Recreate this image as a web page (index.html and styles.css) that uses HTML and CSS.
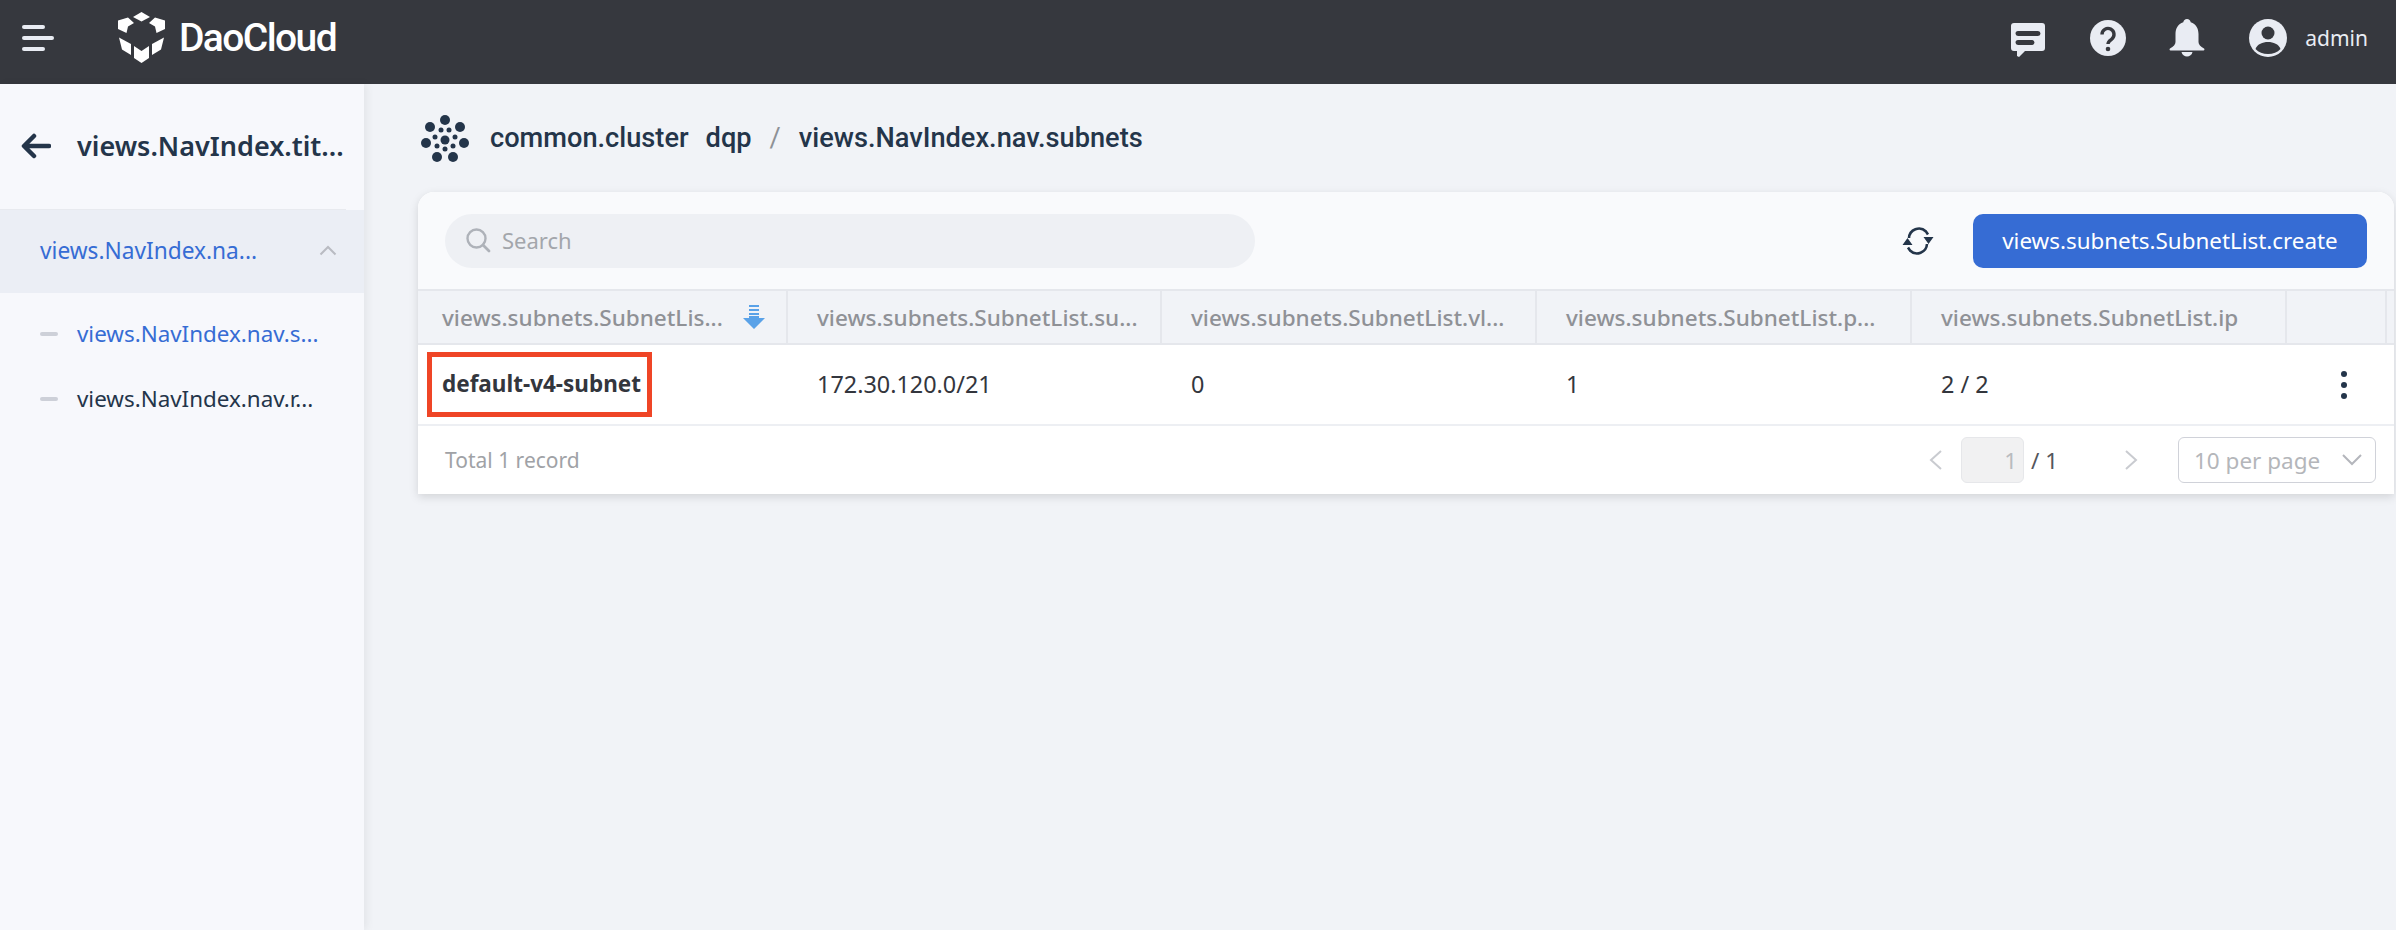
FILE: index.html
```html
<!DOCTYPE html>
<html lang="en">
<head>
<meta charset="utf-8">
<title>DaoCloud</title>
<link rel="stylesheet" href="styles.css">
</head>
<body>
<div class="app">
  <header class="topbar">
    <div class="burger"><span class="b-short"></span><span class="b-long"></span><span class="b-short"></span></div>
    <svg class="logo" viewBox="0 0 64 60" width="64" height="60"><g fill="#fff"><path d="M31.500 4 40 9 31.500 13.500 23 9Z"/><path d="M8 12.500 18 9.500 24 15 18 18.500 16.500 25 8 21Z"/><path d="M55 12.500 45 9.500 39 15 45 18.500 46.500 25 55 21Z"/><path d="M9 29.500 21 36V47L12 41.500Z"/><path d="M54 29.500 42 36V47L51 41.500Z"/><path d="M24 38 31.500 43 39 38V50L31.500 55 24 50Z"/></g></svg>
    <span class="brand">DaoCloud</span>
    <div class="top-right">
      <svg class="i-chat" width="36" height="36" viewBox="0 0 36 36"><path fill="#e9ecf3" fill-rule="evenodd" d="M4 1h28a3 3 0 0 1 3 3v22a3 3 0 0 1-3 3H15l-6 6-2-1v-5H4a3 3 0 0 1-3-3V4a3 3 0 0 1 3-3Zm4 8a2 2 0 0 0 0 5h20a2 2 0 0 0 0-5Zm0 9a2 2 0 0 0 0 5h14a2 2 0 0 0 0-5Z"/></svg>
      <svg class="i-help" width="36" height="36" viewBox="0 0 36 36"><circle cx="18" cy="18" r="18" fill="#e9ecf3"/><path d="M12 14.500a6 6 0 1 1 9.500 4.800c-2 1.500-3.500 2.300-3.500 4.700" fill="none" stroke="#36383e" stroke-width="3.400"/><circle cx="18" cy="29" r="2.300" fill="#36383e"/></svg>
      <svg class="i-bell" width="36" height="38" viewBox="0 0 36 38"><path fill="#e9ecf3" d="M18 0c2 0 3.500 1.500 3.700 3.300C27 5 29.500 9.500 29.500 15v8c0 2.500 2 4.500 5.500 6.500.8.500.5 2-.5 2h-33c-1 0-1.300-1.500-.5-2C4.500 27.500 6.500 25.500 6.500 23v-8c0-5.500 2.500-10 7.800-11.700C14.500 1.500 16 0 18 0Z"/><path fill="#e9ecf3" d="M12.500 33h11c-.5 2.800-3 4.500-5.500 4.500s-5-1.700-5.500-4.500Z"/></svg>
      <svg class="i-user" width="38" height="38" viewBox="0 0 38 38"><circle cx="19" cy="19" r="19" fill="#e9ecf3"/><circle cx="19" cy="14" r="6.500" fill="#36383e"/><path fill="#36383e" d="M6.500 30c2-5 7-7 12.500-7s10.500 2 12.500 7c-3 3.500-7.500 5-12.500 5s-9.500-1.500-12.500-5Z"/></svg>
      <span class="username">admin</span>
    </div>
  </header>
  <div class="body-row">
    <aside class="sidebar">
      <div class="side-head">
        <svg class="back" width="30" height="26" viewBox="0 0 30 26"><path d="M28 13H4M13 3 3 13l10 10" fill="none" stroke="#24354a" stroke-width="4.500" stroke-linecap="round" stroke-linejoin="round"/></svg>
        <span class="side-title">views.NavIndex.tit...</span>
      </div>
      <div class="nav-group">
        <span>views.NavIndex.na...</span>
        <svg width="18" height="11" viewBox="0 0 18 11"><path d="M1.500 9.500 9 2l7.500 7.500" fill="none" stroke="#b9bbc2" stroke-width="2"/></svg>
      </div>
      <div class="nav-item active"><i class="dash"></i><span>views.NavIndex.nav.s...</span></div>
      <div class="nav-item"><i class="dash"></i><span>views.NavIndex.nav.r...</span></div>
    </aside>
    <main class="content">
      <div class="crumbs">
        <svg class="c-icon" width="60" height="60" viewBox="0 0 60 60"><g fill="#24354a"><circle cx="30" cy="12" r="5"/><circle cx="15" cy="19" r="5"/><circle cx="45" cy="19" r="5"/><circle cx="11" cy="35" r="5"/><circle cx="49" cy="35" r="5"/><circle cx="22" cy="49" r="5"/><circle cx="38" cy="49" r="5"/><circle cx="26" cy="22" r="2.500"/><circle cx="34" cy="22" r="2.500"/><circle cx="20" cy="29" r="2.500"/><circle cx="40" cy="29" r="2.500"/><circle cx="30" cy="32" r="4.500"/><circle cx="22" cy="38" r="2.500"/><circle cx="38" cy="38" r="2.500"/><circle cx="30" cy="41" r="2.500"/></g></svg>
        <span class="c-cluster">common.cluster</span>
        <span class="c-name">dqp</span>
        <span class="c-sep">/</span>
        <span class="c-page">views.NavIndex.nav.subnets</span>
      </div>
      <section class="card">
        <div class="toolbar">
          <div class="search">
            <svg width="26" height="26" viewBox="0 0 26 26"><circle cx="11.500" cy="11.500" r="9" fill="none" stroke="#aeb2b9" stroke-width="2.400"/><path d="m18 18 6 6" stroke="#aeb2b9" stroke-width="2.800" stroke-linecap="round"/></svg>
            <span>Search</span>
          </div>
          <svg class="refresh" width="34" height="30" viewBox="0 0 34 30"><g fill="none" stroke="#24354a" stroke-width="2.600"><path d="M8 12a10 10 0 0 1 17-6.500l2 3"/><path d="M26 18a10 10 0 0 1-17 6.500l-2-3"/></g><path fill="#24354a" d="m22.500 11 10 0-5 7ZM1.500 19l10 0-5-7Z"/></svg>
          <button class="primary">views.subnets.SubnetList.create</button>
        </div>
        <div class="table">
          <div class="th th-first"><span>views.subnets.SubnetLis...</span>
            <svg class="sort" width="22" height="24" viewBox="0 0 22 24"><g fill="#5aa2e8"><rect x="6" y="0" width="10" height="2"/><rect x="6" y="4" width="10" height="2"/><rect x="6" y="8" width="10" height="2"/><path d="M6 11h10v2h6L11 24 0 13h6Z"/></g></svg>
          </div>
          <div class="th"><span>views.subnets.SubnetList.su...</span></div>
          <div class="th"><span>views.subnets.SubnetList.vl...</span></div>
          <div class="th"><span>views.subnets.SubnetList.p...</span></div>
          <div class="th"><span>views.subnets.SubnetList.ip</span></div>
          <div class="th"></div>
          <div class="th th-end"></div>
          <div class="td td-name"><span class="marked">default-v4-subnet</span></div>
          <div class="td">172.30.120.0/21</div>
          <div class="td">0</div>
          <div class="td">1</div>
          <div class="td">2 / 2</div>
          <div class="td td-more"><i></i><i></i><i></i></div>
          <div class="td td-end"></div>
        </div>
        <div class="pager">
          <span class="total">Total 1 record</span>
          <svg class="chev-l" width="14" height="20" viewBox="0 0 14 20"><path d="M12 1 2 10l10 9" fill="none" stroke="#c9cbd0" stroke-width="2"/></svg>
          <span class="page-input">1</span>
          <span class="page-of">/ 1</span>
          <svg class="chev-r" width="14" height="20" viewBox="0 0 14 20"><path d="m2 1 10 9-10 9" fill="none" stroke="#c9cbd0" stroke-width="2"/></svg>
          <div class="per-page"><span>10 per page</span><svg width="20" height="12" viewBox="0 0 20 12"><path d="m1 1 9 9 9-9" fill="none" stroke="#b4b6bc" stroke-width="2"/></svg></div>
        </div>
      </section>
    </main>
  </div>
</div>
</body>
</html>
```
FILE: styles.css
```css
* { box-sizing: border-box; }
html, body { margin: 0; padding: 0; }
body {
  width: 2396px;
  height: 930px;
  overflow: hidden;
  font-family: "Noto Sans", "Open Sans", sans-serif;
  color: #33363d;
  background: #f1f3f7;
}
.app { display: flex; flex-direction: column; height: 930px; }

.topbar {
  height: 84px;
  flex: none;
  display: flex;
  align-items: center;
  background: #36383e;
  padding-left: 22px;
  padding-bottom: 8px;
}
.burger { display: flex; flex-direction: column; gap: 7px; width: 32px; }
.burger span { display: block; height: 4px; border-radius: 2px; background: #e9ecf3; }
.b-short { width: 23px; }
.b-long { width: 32px; }
.logo { margin-left: 56px; }
.brand {
  margin-left: 5px;
  font-family: "Roboto", sans-serif;
  font-weight: 500;
  font-size: 39px;
  letter-spacing: -1.6px;
  color: #fff;
}
.top-right { margin-left: auto; display: flex; align-items: center; padding-right: 28px; }
.i-chat { margin-top: 4px; }
.i-help { margin-left: 44px; }
.i-bell { margin-left: 43px; }
.i-user { margin-left: 44px; }
.username { margin-left: 18px; font-size: 21px; color: #e9ecf3; }

.body-row { flex: 1; display: flex; min-height: 0; }
.sidebar {
  width: 364px;
  flex: none;
  background: #f7f8fc;
  box-shadow: 3px 0 8px rgba(0, 0, 0, .06);
}
.side-head {
  height: 126px;
  display: flex;
  align-items: center;
  padding-left: 21px;
  padding-bottom: 2px;
  margin-right: 18px;
  border-bottom: 1px solid #e8eaef;
}
.back { flex: none; }
.side-title { margin-left: 26px; font-size: 27px; font-weight: 600; color: #24354a; white-space: nowrap; }
.nav-group {
  height: 83px;
  display: flex;
  align-items: center;
  justify-content: space-between;
  padding: 0 27px 2px 40px;
  background: #ebeef5;
  color: #366cd4;
  font-size: 22.7px;
}
.nav-item {
  height: 65px;
  display: flex;
  align-items: center;
  padding-left: 40px;
  font-size: 22.4px;
  white-space: nowrap;
  color: #24354a;
}
.nav-group + .nav-item { margin-top: 8px; }
.nav-item.active { color: #366cd4; }
.dash { width: 18px; height: 4px; border-radius: 2px; background: #cdd0d8; margin-right: 19px; }

.content { flex: 1; min-width: 0; padding-left: 54px; padding-right: 2px; }
.crumbs { height: 108px; display: flex; align-items: center; font-family: "Roboto", sans-serif; font-weight: 500; font-size: 27.2px; color: #24354a; }
.c-icon { margin-left: -3px; }
.c-cluster { margin-left: 15px; }
.c-name { margin-left: 17px; }
.c-sep { margin-left: 18px; font-weight: 400; color: #8e9196; }
.c-page { margin-left: 18px; }

.card {
  height: 302px;
  display: flex;
  flex-direction: column;
  background: #fff;
  border-radius: 16px 16px 0 0;
  box-shadow: 0 3px 10px rgba(0, 0, 0, .13);
  overflow: hidden;
}
.toolbar {
  height: 97px;
  flex: none;
  display: flex;
  align-items: center;
  padding: 0 27px;
  background: #f9fafc;
}
.search {
  width: 810px;
  height: 54px;
  display: flex;
  align-items: center;
  gap: 11px;
  padding: 0 0 2px 20px;
  border-radius: 27px;
  background: #eef0f4;
  color: #a3a6ab;
  font-size: 22px;
}
.refresh { margin-left: auto; margin-right: 38px; }
.primary {
  width: 394px;
  height: 54px;
  border: 0;
  border-radius: 10px;
  background: #366cd4;
  color: #fff;
  font: inherit;
  font-size: 22.4px;
}

.table { display: grid; grid-template-columns: 370px 374px 375px 375px 375px 100px 7px; grid-template-rows: 56px 81px; }
.th {
  display: flex;
  align-items: center;
  justify-content: space-between;
  padding: 0 21px 0 29px;
  background: #f1f3f7;
  border-top: 2px solid #e5e7ec;
  border-bottom: 2px solid #e5e7ec;
  border-right: 2px solid #e5e7ec;
  color: #8f9196;
  font-size: 22.5px;
  font-weight: 500;
  white-space: nowrap;
}
.th-first { padding-left: 24px; }
.th-end { border-right: 0; padding: 0; }
.td {
  display: flex;
  align-items: center;
  padding: 0 0 2px 29px;
  background: #fff;
  border-bottom: 2px solid #edeff3;
  font-size: 23.4px;
  white-space: nowrap;
}
.td-name { padding: 0 0 0 9px; }
.marked {
  width: 225px;
  height: 65px;
  display: flex;
  align-items: center;
  padding: 0 0 2px 10px;
  border: 5px solid #ef4526;
  font-size: 22.5px;
  font-weight: 700;
}
.td-more { flex-direction: column; justify-content: center; gap: 5px; padding: 0 0 0 54px; align-items: flex-start; }
.td-more i { width: 6px; height: 6px; border-radius: 50%; background: #24354a; }
.td-end { padding: 0; }

.pager { flex: 1; display: flex; align-items: center; padding: 0 18px 0 27px; background: #fff; font-size: 22.5px; }
.total { color: #a0a2a6; font-size: 21px; }
.chev-l { margin-left: auto; }
.page-input {
  width: 63px;
  height: 46px;
  margin-left: 18px;
  padding-right: 6px;
  display: flex;
  align-items: center;
  justify-content: flex-end;
  border: 1px solid #e6e7ea;
  border-radius: 6px;
  background: #f1f1f2;
  color: #b9bbbf;
}
.page-of { margin-left: 7px; width: 75px; color: #54565c; }
.chev-r { margin-left: 18px; }
.per-page {
  width: 198px;
  height: 46px;
  margin-left: 40px;
  display: flex;
  align-items: center;
  justify-content: space-between;
  padding: 0 13px 0 15px;
  border: 1px solid #d0d2d9;
  border-radius: 6px;
  color: #b4b6ba;
}
```
